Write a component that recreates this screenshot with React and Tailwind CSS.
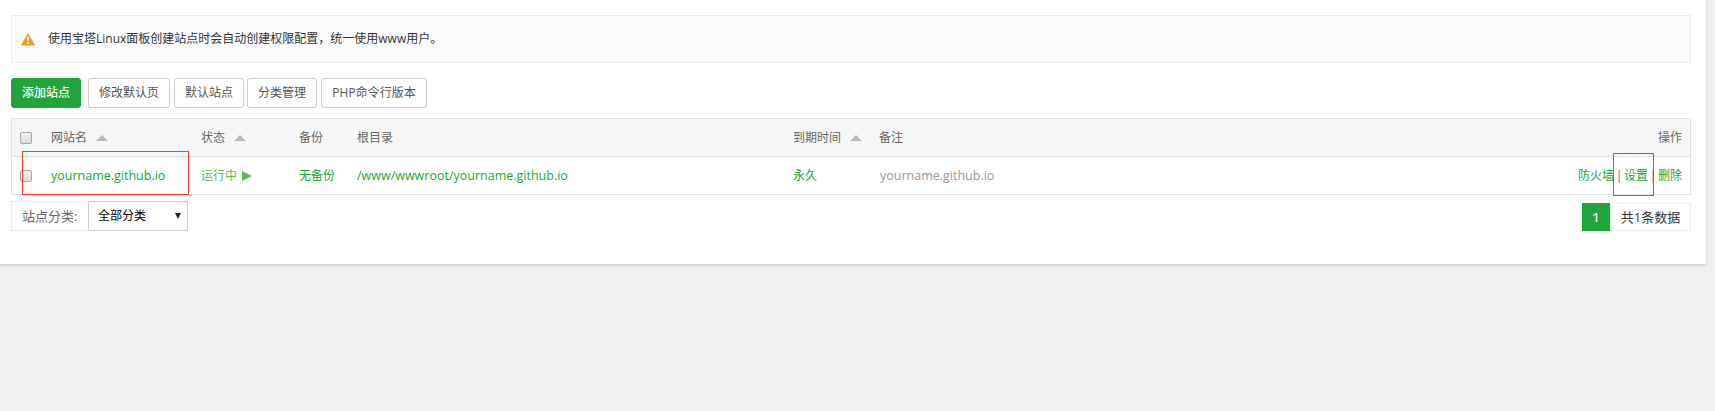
const Sort = ({ className = "" }) => (
  <svg className={`h-[6px] w-3 ${className}`} viewBox="0 0 12 6">
    <path d="M0 6 6 0l6 6z" fill="#b8b8b8" />
  </svg>
);

const Checkbox = () => (
  <span className="block h-3 w-3 rounded-[2px] border border-[#a8a8a8] bg-linear-to-b from-[#f0f0f0] to-[#dcdcdc]" />
);

const Button = ({ className, children }) => (
  <button
    className={`h-[30px] shrink-0 rounded-[3px] border border-[#ccc] bg-white text-[12px] text-[#555] ${className}`}
  >
    {children}
  </button>
);

const columns = "grid grid-cols-[39px_150px_98px_58px_436px_86px_1fr_auto] items-center pr-2";

export default function App() {
  return (
    <div className="h-[411px] overflow-hidden bg-[#f0f0f0] font-['Open_Sans','Noto_Sans_CJK_SC',sans-serif] text-[12px] leading-[18px] text-[#666]">
      <main className="h-[264px] w-[1706px] bg-white pl-[11px] pr-[15px] pt-[15px] shadow-[0_1px_3px_rgba(0,0,0,0.2)]">
        <div className="flex h-12 items-center border border-[#ececec] bg-[#fbfbfb] pl-[9px] text-[#333]">
          <svg className="mr-[13px] h-[13px] w-[14px]" viewBox="0 0 14 13">
            <path
              d="M7 .4 13.7 12.2H.3z"
              fill="#f39c1b"
              stroke="#f39c1b"
              strokeWidth=".5"
              strokeLinejoin="round"
            />
            <path d="M6 4h2l-.3 4H6.3zM6.1 9h1.8v1.7H6.1z" fill="#fff" />
          </svg>
          <span>使用宝塔Linux面板创建站点时会自动创建权限配置，统一使用www用户。</span>
        </div>

        <div className="mt-[15px] flex">
          <Button className="mr-[7px] w-[70px] border-[#20a53a]! bg-[#20a53a]! font-medium text-white!">添加站点</Button>
          <Button className="mr-1 w-[82px]">修改默认页</Button>
          <Button className="mr-[3px] w-[70px]">默认站点</Button>
          <Button className="mr-1 w-[70px]">分类管理</Button>
          <Button className="w-[106px]">PHP命令行版本</Button>
        </div>

        <section className="relative mt-[10px] h-[77px] border border-[#e2e2e2]">
          <div className={`${columns} h-[38px] border-b border-[#e2e2e2] bg-[#f6f6f6]`}>
            <span className="pl-2"><Checkbox /></span>
            <span className="flex items-center">网站名<Sort className="ml-[9px]" /></span>
            <span className="flex items-center">状态<Sort className="ml-[9px]" /></span>
            <span>备份</span>
            <span>根目录</span>
            <span className="flex items-center">到期时间<Sort className="ml-[9px]" /></span>
            <span>备注</span>
            <span>操作</span>
          </div>
          <div className={`${columns} h-[37px] whitespace-nowrap text-[#20a53a]`}>
            <span className="pl-2"><Checkbox /></span>
            <span className="text-[12.5px]">yourname.github.io</span>
            <span className="flex items-center text-[#5cb85c]">
              运行中
              <svg className="ml-[5px] h-[10px] w-[10px]" viewBox="0 0 10 10">
                <path d="M0 0l10 5-10 5z" fill="#5cb85c" />
              </svg>
            </span>
            <span>无备份</span>
            <span className="text-[12.5px]">/www/wwwroot/yourname.github.io</span>
            <span>永久</span>
            <span className="pl-px text-[12.5px] text-[#999]">yourname.github.io</span>
            <span className="flex">
              防火墙<i className="w-[10px] text-center not-italic text-[#666]">|</i>
              设置<i className="w-[10px] text-center not-italic text-[#666]">|</i>删除
            </span>
          </div>
          <span className="absolute left-[10px] top-[32px] h-[44px] w-[167px] border border-[#f73b3b]" />
          <span className="absolute left-[1601px] top-[34px] h-[43px] w-[41px] border border-[#f73b3b]" />
        </section>

        <footer className="mt-[6px] flex h-[30px] justify-between text-[13px]">
          <div className="flex">
            <span className="flex w-[77px] items-center border border-r-0 border-[#ececec] pl-[10px]">站点分类:</span>
            <div className="flex w-[100px] items-center justify-between border border-[#ccc] pl-[9px] pr-[6px] text-[12px] text-black">
              全部分类
              <svg className="h-[6px] w-[6px]" viewBox="0 0 6 6"><path d="M0 0h6L3 6z" fill="#222" /></svg>
            </div>
          </div>
          <div className="mt-[2px] flex h-7">
            <span className="flex w-7 items-center justify-center bg-[#20a53a] font-semibold text-white">1</span>
            <span className="flex w-[81px] items-center justify-center border border-[#ececec] text-[#333]">共1条数据</span>
          </div>
        </footer>
      </main>
    </div>
  );
}
